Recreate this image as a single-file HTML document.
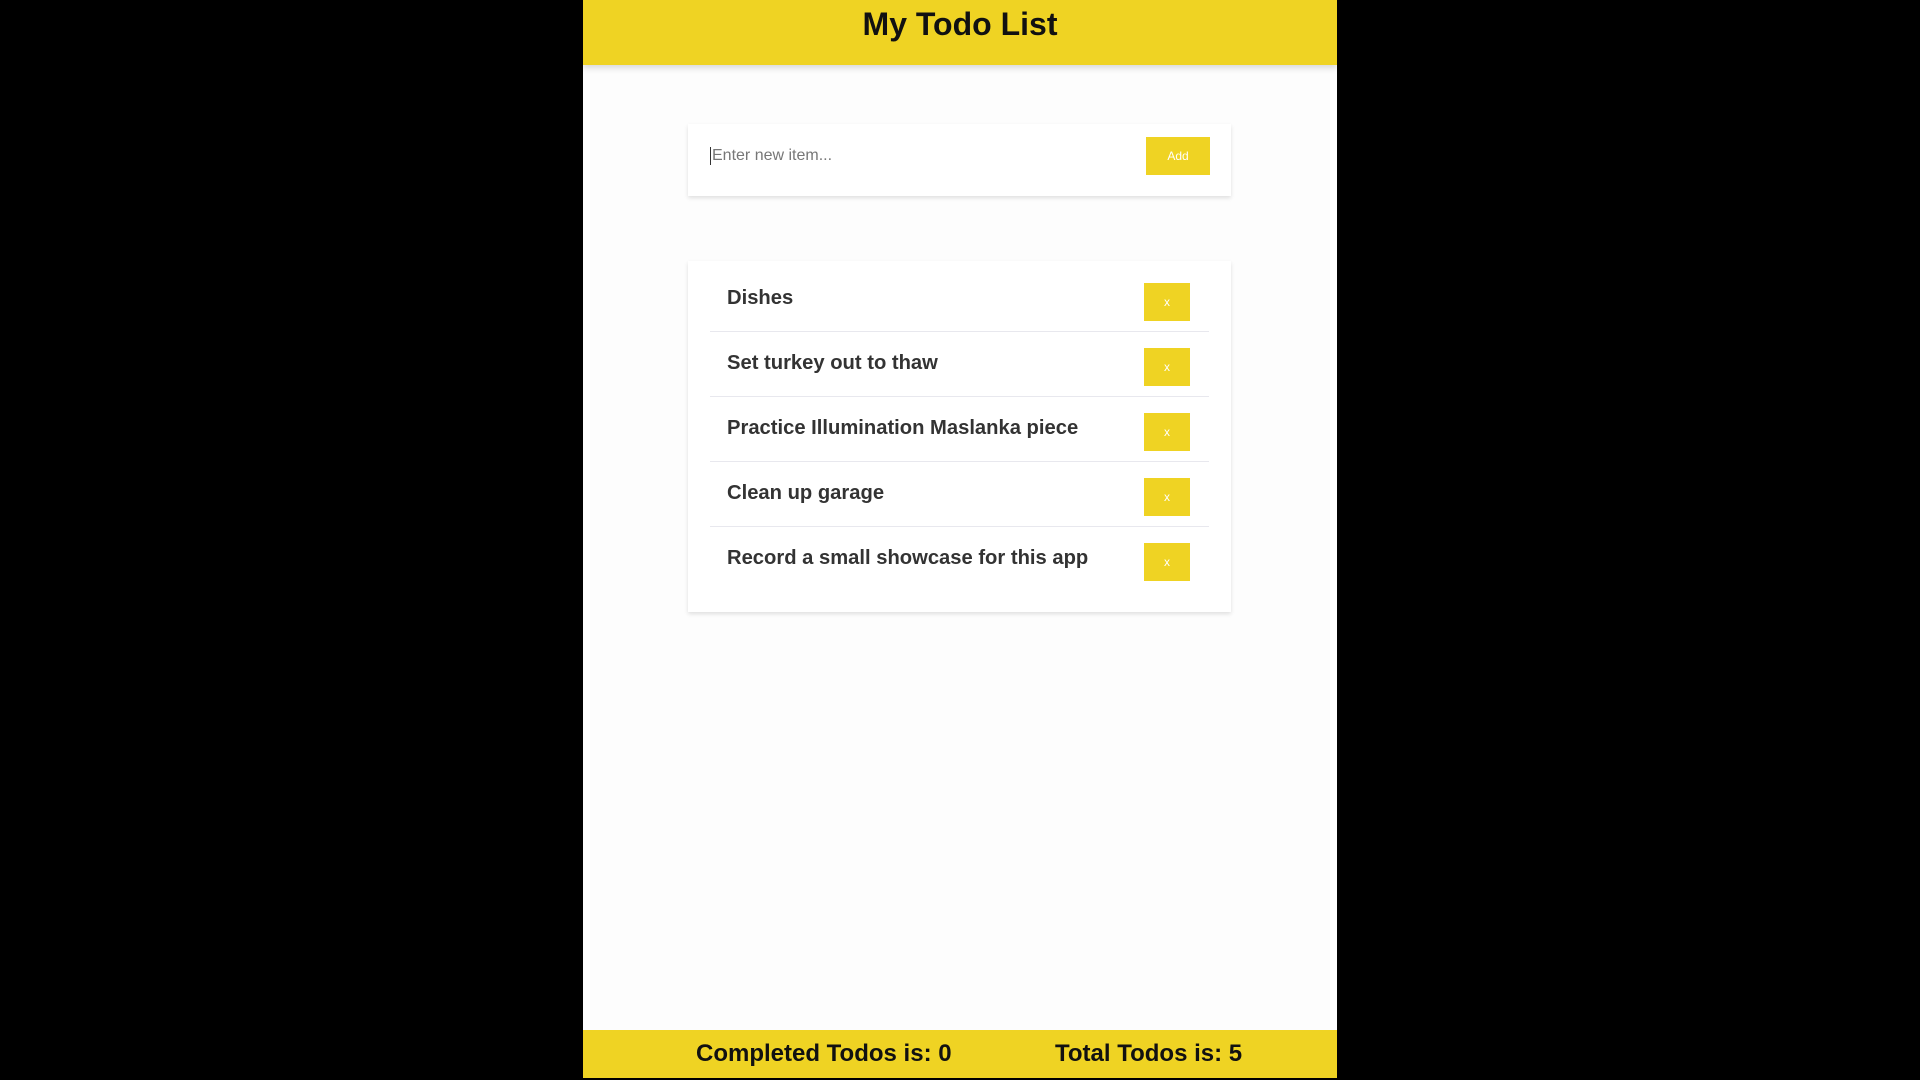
<!DOCTYPE html>
<html><head><style>
body{margin:0;width:1920px;height:1080px;background:#000;position:relative;overflow:hidden;font-family:"Liberation Sans",Arial,sans-serif}
.app{position:absolute;left:583px;top:0;width:754px;height:1078px;background:#fdfdfd}
.hdr{position:absolute;left:0;top:0;width:754px;height:65px;background:#efd323;box-shadow:0 3px 6px rgba(0,0,0,.15);text-align:center;font-weight:bold;font-size:32px;line-height:48px;color:#111}
.card{position:absolute;left:105px;width:543px;background:#fff;box-shadow:0 2px 4px rgba(0,0,0,.12)}
.inp{top:124px;height:72px}
.inp span{position:absolute;left:22px;top:23px;font-size:16px;color:#777;border-left:1px solid #333;padding-left:1px}
.add{position:absolute;left:458px;top:13px;width:64px;height:38px;background:#efd323;color:#fff;font-size:12px;text-align:center;line-height:38px}
.list{top:261px;height:351px}
.row{position:absolute;left:22px;width:499px;height:63px;border-bottom:1px solid #e8e8ee}
.row b{position:absolute;left:17px;top:19px;font-size:20.2px;color:#333}
.x{position:absolute;left:434px;top:15px;width:46px;height:38px;background:#efd323;color:#fff;font-size:12px;text-align:center;line-height:38px}
.ftr{position:absolute;left:0;top:1030px;width:754px;height:48px;background:#efd323;font-weight:bold;font-size:24px;color:#111}
.ftr span{position:absolute;top:10px}
</style></head><body>
<div class="app">
<div class="hdr">My Todo List</div>
<div class="card inp"><span>Enter new item...</span><div class="add">Add</div></div>
<div class="card list">
<div class="row" style="top:7px"><b>Dishes</b><div class="x">x</div></div>
<div class="row" style="top:72px"><b>Set turkey out to thaw</b><div class="x">x</div></div>
<div class="row" style="top:137px"><b>Practice Illumination Maslanka piece</b><div class="x">x</div></div>
<div class="row" style="top:202px"><b>Clean up garage</b><div class="x">x</div></div>
<div class="row" style="top:267px;border:none"><b>Record a small showcase for this app</b><div class="x">x</div></div>
</div>
<div class="ftr"><span style="left:113px">Completed Todos is: 0</span><span style="left:472px">Total Todos is: 5</span></div>
</div>
</body></html>
